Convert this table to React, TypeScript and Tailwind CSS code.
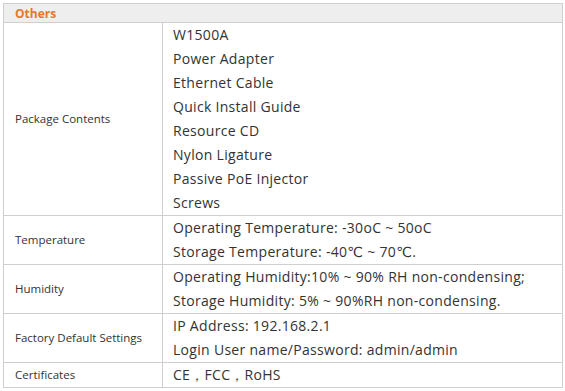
const rows: { label: string; lines: string[] }[] = [
  {
    label: "Package Contents",
    lines: [
      "W1500A",
      "Power Adapter",
      "Ethernet Cable",
      "Quick Install Guide",
      "Resource CD",
      "Nylon Ligature",
      "Passive PoE Injector",
      "Screws",
    ],
  },
  {
    label: "Temperature",
    lines: ["Operating Temperature: -30oC ~ 50oC", "Storage Temperature: -40℃ ~ 70℃."],
  },
  {
    label: "Humidity",
    lines: [
      "Operating Humidity:10% ~ 90% RH non-condensing;",
      "Storage Humidity: 5% ~ 90%RH non-condensing.",
    ],
  },
  {
    label: "Factory Default Settings",
    lines: ["IP Address: 192.168.2.1", "Login User name/Password: admin/admin"],
  },
  { label: "Certificates", lines: ["CE，FCC，RoHS"] },
];

export default function App() {
  return (
    <div className="bg-white pl-[3px] pt-[3px] w-[565px] h-[391px] overflow-hidden" style={{ fontFamily: '"Open Sans", "DejaVu Sans", sans-serif' }}>
      <table className="border-collapse w-[560px] table-fixed">
        <colgroup>
          <col className="w-[159px]" />
          <col />
        </colgroup>
        <tbody>
          <tr className="bg-[#eeeeee] h-[19px]">
            <td colSpan={2} className="border border-[#cfcfcf] px-[11px] py-0 text-[12px] font-bold text-[#e5762c] leading-[17px]">
              Others
            </td>
          </tr>
          {rows.map((r) => (
            <tr key={r.label}>
              <td className="border border-[#cfcfcf] px-[11px] text-[11.5px] text-[#333333] align-middle">
                {r.label}
              </td>
              <td className="border border-[#cfcfcf] pl-[10px] pr-2 py-0 align-middle">
                {r.lines.map((l) => (
                  <div key={l} className="text-[14px] tracking-[0.3px] text-[#333333] leading-[24px] whitespace-nowrap">
                    {l}
                  </div>
                ))}
              </td>
            </tr>
          ))}
        </tbody>
      </table>
    </div>
  );
}
